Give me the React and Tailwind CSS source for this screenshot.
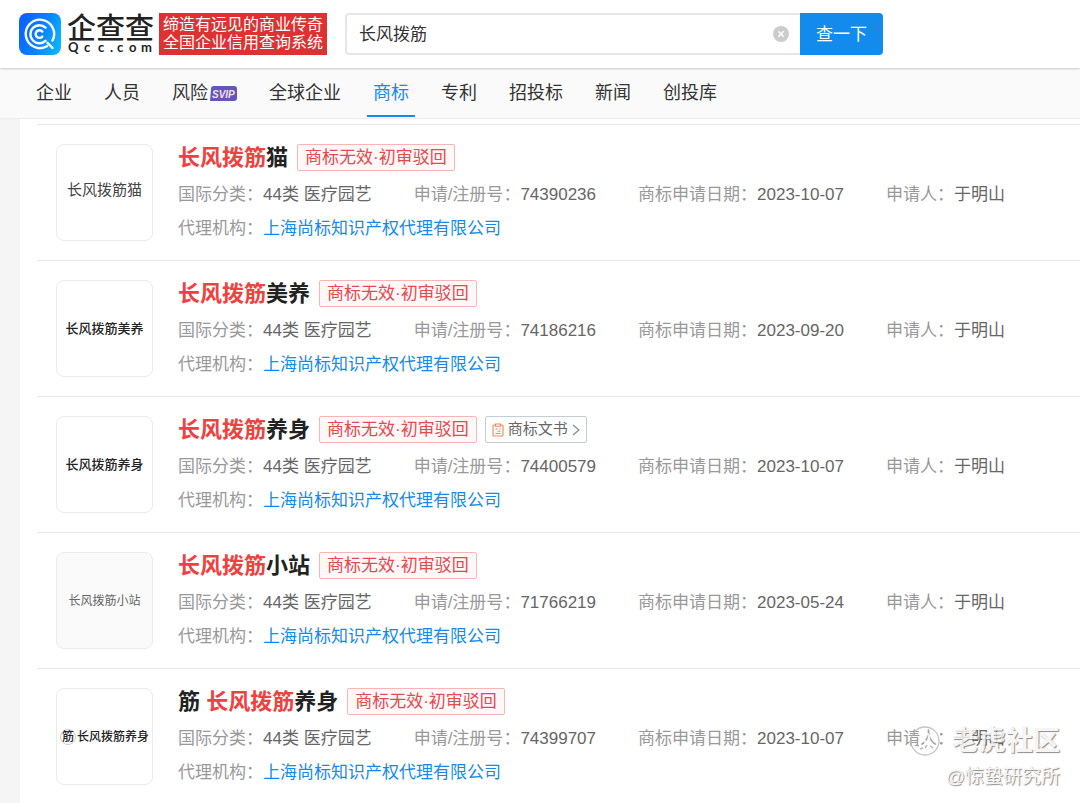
import React from "react";

const TABS = [
  { label: "企业" },
  { label: "人员" },
  { label: "风险", svip: true },
  { label: "全球企业" },
  { label: "商标", active: true },
  { label: "专利" },
  { label: "招投标" },
  { label: "新闻" },
  { label: "创投库" },
];

const SANS = "font-['Liberation_Sans','Noto_Sans_CJK_SC',sans-serif]";

const MARKS = [
  { before: "", after: "猫", number: "74390236", date: "2023-10-07", mark: "text-[15px] text-[#444] pb-1" },
  { before: "", after: "美养", number: "74186216", date: "2023-09-20", mark: "text-[13px] font-medium text-[#222]" },
  { before: "", after: "养身", number: "74400579", date: "2023-10-07", doc: true, mark: "text-[13px] font-medium text-[#222]" },
  { before: "", after: "小站", number: "71766219", date: "2023-05-24", shaded: true, mark: "text-[12px] text-[#666]" },
  { before: "筋 ", after: "养身", number: "74399707", date: "2023-10-07", ring: true, mark: "text-[12px] font-medium text-[#222]" },
];

function Logo() {
  return (
    <a href="#home" aria-label="企查查 Qcc.com" className="flex shrink-0 items-center gap-[6px]">
      <svg viewBox="0 0 42 42" className="size-[42px]" fill="none" aria-hidden="true">
        <defs>
          <linearGradient id="qcc" x1="0" y1="0.3" x2="1" y2="0.7">
            <stop offset="0" stopColor="#0a62ff" />
            <stop offset="0.5" stopColor="#0a80ff" />
            <stop offset="1" stopColor="#0ab4ff" />
          </linearGradient>
        </defs>
        <rect width="42" height="42" rx="8" fill="url(#qcc)" />
        <g stroke="#fff" strokeWidth="2.4" strokeLinecap="round">
          <path d="M33.500 27.500A14.200 14.200 0 1 0 28 33.200M28.500 29.800L33.500 35" />
          <path d="M26.500 27.800a9 9 0 1 1 0-13.200" />
          <path d="M23.300 23.600a3.800 3.800 0 1 1 0-5" />
        </g>
      </svg>
      <svg viewBox="0 0 88 42" className="h-[42px] w-[88px] overflow-visible" aria-hidden="true">
        <text x="0" y="26" fontSize="29" fontWeight="500" fill="#222" fontFamily="'Noto Sans CJK SC', sans-serif">企查查</text>
        <text x="1 17 31 43 50 62 74" y="39" fontSize="13" fontWeight="700" fill="#222" fontFamily="Lato, sans-serif">Qcc.com</text>
      </svg>
    </a>
  );
}

function Header() {
  return (
    <header className="relative z-10 flex h-[68px] items-center bg-white pl-[19px] shadow-[0_1px_2px_rgba(0,0,0,0.2)]">
      <Logo />
      <p className="ml-1 shrink-0 bg-[#dc3232] px-1 py-[3px] text-base leading-[18px] text-white">
        缔造有远见的商业传奇
        <br />
        全国企业信用查询系统
      </p>
      <form className="ml-[18px] flex h-[42px] max-w-[538px] flex-1" onSubmit={(e) => e.preventDefault()}>
        <div className="flex min-w-0 flex-1 items-center rounded-l border-2 border-r-0 border-[#e6e6e6] bg-white pr-[11px] pl-3">
          <input aria-label="搜索" defaultValue="长风拨筋" className="min-w-0 flex-1 bg-transparent pt-[2px] text-[17px] text-[#333] outline-none" />
          <button type="button" aria-label="清除" className="size-4">
            <svg viewBox="0 0 16 16" className="size-4">
              <circle cx="8" cy="8" r="8" fill="#ccc" />
              <path d="m5.300 5.300 5.400 5.400m0-5.400-5.400 5.400" stroke="#fff" strokeWidth="1.5" />
            </svg>
          </button>
        </div>
        <button type="submit" className="w-[83px] rounded-r-sm bg-[#128bed] pt-[2px] text-[17px] text-white">查一下</button>
      </form>
    </header>
  );
}

function Tabs() {
  return (
    <nav className="flex h-[51px] gap-5 border-b border-[#ececec] bg-[#fafafa] pl-[30px]">
      {TABS.map((t) => (
        <a
          key={t.label}
          href="#tab"
          className={
            "flex h-[49px] items-center gap-[2px] border-b-2 px-[6px] pt-[3px] text-lg whitespace-nowrap " +
            (t.active ? "border-[#128bed] text-[#128bed]" : "border-transparent text-[#333]")
          }
        >
          {t.label}
          {t.svip && (
            <svg viewBox="0 0 27 15" className="h-[15px] w-[27px]" role="img" aria-label="SVIP">
              <path d="M4 0h20a3 3 0 0 1 3 3v9a3 3 0 0 1-3 3H0l1-12a3 3 0 0 1 3-3z" fill="#6258b4" />
              <text x="2" y="11.5" fontSize="10" fontWeight="700" fontStyle="italic" fill="#f8dfe4" fontFamily="'Liberation Sans', sans-serif">SVIP</text>
            </svg>
          )}
        </a>
      ))}
    </nav>
  );
}

function Field({ label, children }) {
  return (
    <div className="flex whitespace-nowrap">
      <dt className="text-[#999]">{label}：</dt>
      <dd className="text-[#666]">{children}</dd>
    </div>
  );
}

function MarkRow({ m }) {
  return (
    <li className="flex gap-[25px] border-t border-[#e8e8e8] py-[19px] pl-[18px] last:pb-[18px]">
      <div className={"flex size-[97px] shrink-0 items-center justify-center rounded-lg border border-[#ebebeb] whitespace-pre " + m.mark + (m.shaded ? " bg-[#fafafa]" : " bg-white")}>
        {m.ring && (
          <span className="mr-px flex size-4 shrink-0 items-center justify-center rounded-full border border-[#ccc]">筋</span>
        )}
        长风拨筋{m.after}
      </div>
      <div className="min-w-0 flex-1">
        <div className="flex h-[27px] items-center whitespace-nowrap">
          <h2 className="text-[22px] leading-[27px] font-bold whitespace-pre text-[#222]">
            {m.before}
            <em className="text-[#f04040] not-italic">长风拨筋</em>
            {m.after}
          </h2>
          <span className="ml-[9px] flex h-[27px] items-center rounded-xs border border-[#f7b5b5] bg-[#fff8f8] px-[7px] text-[17px] text-[#e5484d]">
            商标无效·初审驳回
          </span>
          {m.doc && (
            <a href="#doc" className="ml-2 flex h-[27px] items-center rounded-xs border border-[#c5cdd8] px-[6px] text-[15px] text-[#666]">
              <svg viewBox="0 0 12 14" className="mr-1 h-[14px] w-3" fill="none" stroke="#f0885a" strokeWidth="1.1" aria-hidden="true">
                <path d="M3.500 2H2a1 1 0 0 0-1 1v9a1 1 0 0 0 1 1h8a1 1 0 0 0 1-1V3a1 1 0 0 0-1-1H8.500M3.500 1h5v2.200h-5zM3.500 6h2M7 6h1.500M5.500 8.200h3M3.500 10.500h5" />
              </svg>
              商标文书
              <svg viewBox="0 0 8 12" className="ml-1 h-3 w-2" fill="none" stroke="#888" strokeWidth="1.2" aria-hidden="true">
                <path d="m1 1 6 5-6 5" />
              </svg>
            </a>
          )}
        </div>
        <dl className="-mb-1 mt-3 flex flex-wrap gap-x-[42px] gap-y-[10px] text-[17px] leading-6">
          <Field label="国际分类">44类 医疗园艺</Field>
          <Field label="申请/注册号">{m.number}</Field>
          <Field label="商标申请日期">{m.date}</Field>
          <Field label="申请人">于明山</Field>
          <div className="flex basis-full whitespace-nowrap">
            <dt className="text-[#999]">代理机构：</dt>
            <dd>
              <a href="#agency" className="text-[#128bed]">上海尚标知识产权代理有限公司</a>
            </dd>
          </div>
        </dl>
      </div>
    </li>
  );
}

function Watermark() {
  return (
    <div className="pointer-events-none absolute right-5 bottom-3 flex flex-col items-end text-[#f4f4f4] opacity-85 [text-shadow:1px_1px_1px_#777]">
      <div className="flex items-center gap-3 text-[27px] leading-9 font-bold">
        <svg viewBox="0 0 30 30" className="size-[30px]" fill="none" aria-hidden="true">
          <circle cx="15" cy="15" r="14" stroke="#bbb" strokeWidth="1.3" />
          <path d="M7 21c5 1 9-1 11-5s1-7-1-9M12 8c0 5 3 9 10 12" stroke="#fff" strokeWidth="2.4" />
          <path d="M6 19l3 1M10 23l3-1M15 22l2-3M20 20l3 2" stroke="#aaa" strokeWidth="1.4" />
        </svg>
        老虎社区
      </div>
      <div className="mt-1 text-[19px] leading-7">@惊蛰研究所</div>
    </div>
  );
}

export default function App() {
  return (
    <div className={"relative min-h-screen overflow-hidden bg-[#f5f5f5] " + SANS}>
      <Header />
      <Tabs />
      <main className="ml-5 bg-white pt-[5px] pl-[18px]">
        <ul>
          {MARKS.map((m) => (
            <MarkRow key={m.number} m={m} />
          ))}
        </ul>
      </main>
      <Watermark />
    </div>
  );
}
